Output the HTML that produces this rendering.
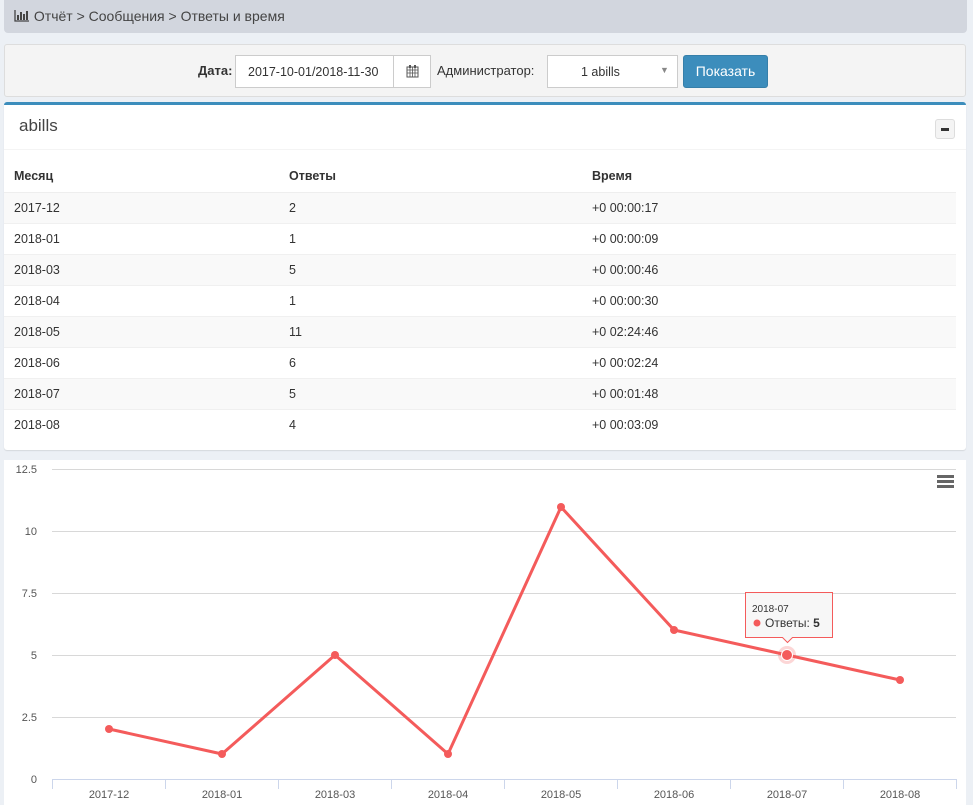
<!DOCTYPE html>
<html><head><meta charset="utf-8"><style>
body{margin:0;width:973px;height:805px;background:#ecf0f5;font-family:"Liberation Sans","DejaVu Sans",sans-serif;font-size:13px;color:#333;position:relative;overflow:hidden}
.crumb{position:absolute;left:4px;top:0;width:963px;height:33px;background:#d2d6de;border-radius:0 0 4px 4px;font-size:14px;color:#444;line-height:33px}
.filt{position:absolute;left:4px;top:44px;width:962px;height:53px;background:#f4f4f4;border:1px solid #ddd;border-radius:3px;box-sizing:border-box}
.box{position:absolute;left:4px;top:102px;width:962px;height:348px;background:#fff;border-top:3px solid #3c8dbc;border-radius:3px;box-sizing:border-box;box-shadow:0 1px 1px rgba(0,0,0,.1)}
table{border-collapse:collapse;position:absolute;left:4px;top:160px;width:952px}
td,th{height:31px;padding:0 0 0 10px;text-align:left;font-size:12.5px;box-sizing:border-box}
th{font-weight:bold;border-bottom:1px solid #eee;height:32px}
tr:nth-child(even) td{background:#f9f9f9}
td{border-top:1px solid #f0f0f0}
.chart{position:absolute;left:4px;top:460px;width:962px;height:345px;background:#fff}
</style></head><body>
<div class="crumb"><span style="position:absolute;left:10px;top:0">
<svg width="16" height="13" viewBox="0 0 16 13" style="vertical-align:-1px"><path d="M1 1v11h14" stroke="#444" stroke-width="1.3" fill="none"/><rect x="3" y="6" width="2" height="5" fill="#444"/><rect x="6" y="3" width="2" height="8" fill="#444"/><rect x="9" y="5" width="2" height="6" fill="#444"/><rect x="12" y="2" width="2" height="9" fill="#444"/></svg>
 Отчёт &gt; Сообщения &gt; Ответы и время</span></div>
<div class="filt">
<span style="position:absolute;left:193px;top:18px;font-weight:bold;font-size:13px">Дата:</span>
<div style="position:absolute;left:230px;top:10px;width:196px;height:33px;background:#fff;border:1px solid #ccc;box-sizing:border-box"><span style="position:absolute;left:12px;top:9px;font-size:12.5px">2017-10-01/2018-11-30</span><div style="position:absolute;left:157px;top:0;width:1px;height:31px;background:#ccc"></div>
<svg style="position:absolute;left:170px;top:9px" width="13" height="13" viewBox="0 0 13 13"><rect x="1" y="2" width="11" height="10" fill="none" stroke="#555"/><path d="M1 5h11M1 8h11M4 2v10M6.5 2v10M9 2v10" stroke="#555" stroke-width=".8"/><rect x="3" y="0" width="2" height="3" fill="#555"/><rect x="8" y="0" width="2" height="3" fill="#555"/></svg></div>
<span style="position:absolute;left:432px;top:18px;font-size:13px">Администратор:</span>
<div style="position:absolute;left:542px;top:10px;width:131px;height:33px;background:#fff;border:1px solid #ccc;box-sizing:border-box"><span style="position:absolute;left:33px;top:9px;font-size:12.5px">1 abills</span><span style="position:absolute;left:112px;top:9px;font-size:9px;color:#888">▼</span></div>
<div style="position:absolute;left:678px;top:10px;width:85px;height:33px;background:#3c8dbc;border:1px solid #367fa9;border-radius:3px;box-sizing:border-box;color:#fff;font-size:14px;text-align:center;line-height:31px">Показать</div>
</div>
<div class="box">
<div style="position:absolute;left:15px;top:11px;font-size:17px;color:#444">abills</div>
<div style="position:absolute;left:931px;top:14px;width:20px;height:20px;background:#f4f4f4;border:1px solid #ddd;border-radius:3px;box-sizing:border-box"><div style="position:absolute;left:5px;top:8px;width:8px;height:3px;background:#333"></div></div>
<div style="position:absolute;left:0;top:44px;width:100%;height:1px;background:#f4f4f4"></div>
</div>
<table>
<tr><th style="width:275px">Месяц</th><th style="width:303px">Ответы</th><th>Время</th></tr>
<tr><td>2017-12</td><td>2</td><td>+0 00:00:17</td></tr>
<tr><td>2018-01</td><td>1</td><td>+0 00:00:09</td></tr>
<tr><td>2018-03</td><td>5</td><td>+0 00:00:46</td></tr>
<tr><td>2018-04</td><td>1</td><td>+0 00:00:30</td></tr>
<tr><td>2018-05</td><td>11</td><td>+0 02:24:46</td></tr>
<tr><td>2018-06</td><td>6</td><td>+0 00:02:24</td></tr>
<tr><td>2018-07</td><td>5</td><td>+0 00:01:48</td></tr>
<tr><td>2018-08</td><td>4</td><td>+0 00:03:09</td></tr>
</table>
<div class="chart"></div>
<svg style="position:absolute;left:0;top:0" width="973" height="805" font-family="Liberation Sans, DejaVu Sans, sans-serif" font-size="11" fill="#555">
<g stroke="#d8d8d8"><path d="M52 469.5H956M52 531.5H956M52 593.5H956M52 655.5H956M52 717.5H956"/></g>
<path d="M52 779.5H956" stroke="#ccd6eb"/>
<g stroke="#ccd6eb"><path d="M52.5 779v10M165.5 779v10M278.5 779v10M391.5 779v10M504.5 779v10M617.5 779v10M730.5 779v10M843.5 779v10M956.5 779v10"/></g>
<g text-anchor="end"><text x="37" y="473">12.5</text><text x="37" y="535">10</text><text x="37" y="597">7.5</text><text x="37" y="659">5</text><text x="37" y="721">2.5</text><text x="37" y="783">0</text></g>
<g text-anchor="middle"><text x="109" y="798">2017-12</text><text x="222" y="798">2018-01</text><text x="335" y="798">2018-03</text><text x="448" y="798">2018-04</text><text x="561" y="798">2018-05</text><text x="674" y="798">2018-06</text><text x="787" y="798">2018-07</text><text x="900" y="798">2018-08</text></g>
<polyline points="109,729 222,754 335,655 448,754 561,507 674,630 787,655 900,680" fill="none" stroke="#f45b5b" stroke-width="3" stroke-linejoin="round"/>
<g fill="#f45b5b"><circle cx="109" cy="729" r="4"/><circle cx="222" cy="754" r="4"/><circle cx="335" cy="655" r="4"/><circle cx="448" cy="754" r="4"/><circle cx="561" cy="507" r="4"/><circle cx="674" cy="630" r="4"/><circle cx="900" cy="680" r="4"/></g>
<circle cx="787" cy="655" r="9" fill="#f45b5b" opacity=".25"/><circle cx="787" cy="655" r="5.5" fill="#f45b5b" stroke="#fff"/>
<g fill="#666"><rect x="937" y="475" width="17" height="3"/><rect x="937" y="480" width="17" height="3"/><rect x="937" y="485" width="17" height="3"/></g>
<path d="M745.5 592.5h87v45h-40l-5 5-5-5h-37z" fill="#f7f7f7" stroke="#f45b5b" fill-opacity=".95"/>
<text x="752" y="612" font-size="10" fill="#333">2018-07</text>
<circle cx="757" cy="623" r="3.5" fill="#f45b5b"/>
<text x="765" y="627" font-size="12" fill="#333">Ответы: <tspan font-weight="bold">5</tspan></text>
</svg>
</body></html>
